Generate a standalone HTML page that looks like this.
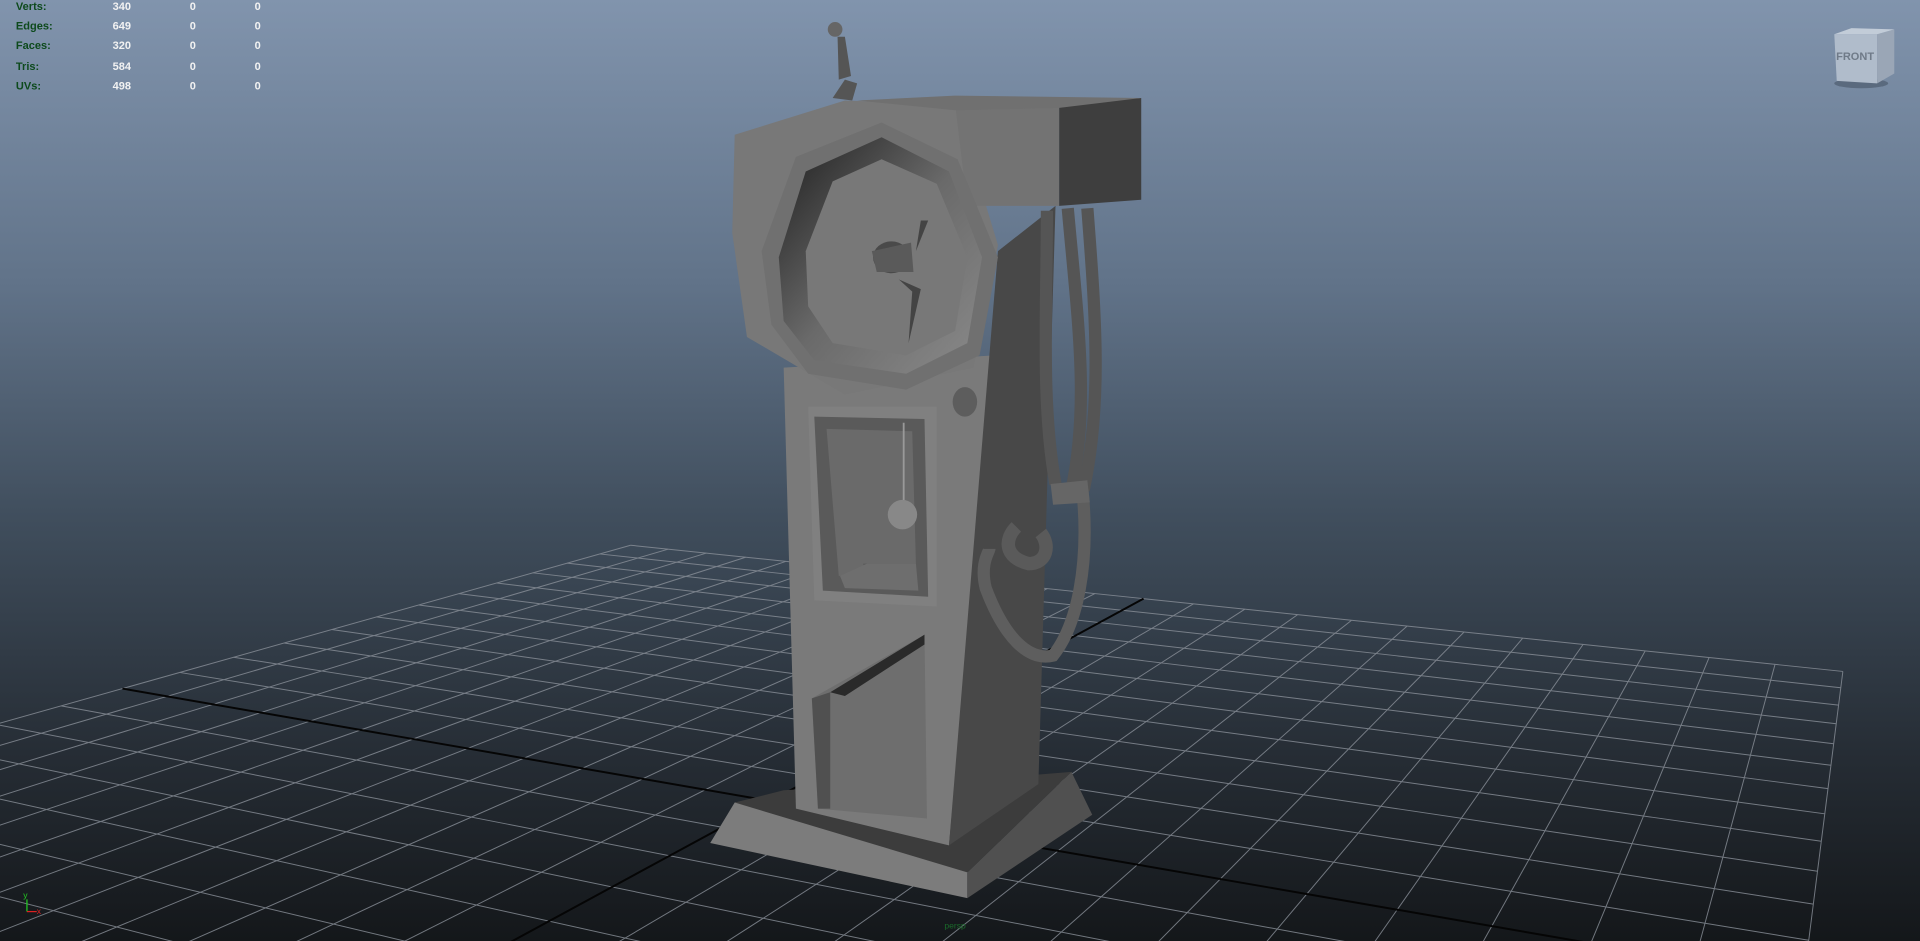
<!DOCTYPE html>
<html><head><meta charset="utf-8"><style>
html,body{margin:0;padding:0;width:1920px;height:941px;overflow:hidden;background:#333}
svg{display:block}
</style></head><body>
<svg id="s" width="1920" height="941" viewBox="0 0 1568 768" preserveAspectRatio="none" xmlns="http://www.w3.org/2000/svg">
<defs>
<linearGradient id="bg" x1="0" y1="0" x2="0" y2="1">
<stop offset="0" stop-color="#8194ad"/>
<stop offset="0.3" stop-color="#617389"/>
<stop offset="0.55" stop-color="#404e5d"/>
<stop offset="0.8" stop-color="#262d35"/>
<stop offset="1" stop-color="#14171a"/>
</linearGradient>
<linearGradient id="face" x1="0" y1="0" x2="1" y2="1">
<stop offset="0" stop-color="#1e1e1e"/><stop offset="0.5" stop-color="#6a6a6a"/><stop offset="1" stop-color="#8a8a8a"/>
</linearGradient>
</defs>
<rect width="1568" height="768" fill="url(#bg)"/>
<g id="grid" stroke="#8a9099" stroke-width="0.8" fill="none" opacity="0.8"></g>
<g id="axes" stroke="#050505" stroke-width="1.6"></g>
<g stroke="none">
<polygon points="580,688 600,655 640,648 790,712 790,733" fill="#7c7c7c"/>
<polygon points="790,712 790,733 892,665 875,630" fill="#505050"/>
<polygon points="600,655 640,645 850,632 875,630 790,712" fill="#3c3c3c"/>
<polygon points="640,300 812,290 775,690 650,660" fill="#7a7a7a"/>
<polygon points="815,205 862,168 848,640 775,690" fill="#484848"/>
<polygon points="600,110 690,82 780,85 815,200 795,300 690,322 610,275 598,190" fill="#787878"/>
<polygon points="780,85 865,85 865,168 790,168" fill="#737373"/>
<polygon points="865,85 932,80 932,163 865,168" fill="#3e3e3e"/>
<polygon points="700,82 780,78 932,80 865,88 780,90" fill="#707070"/>
<polygon points="622,205 650,128 720,100 782,130 815,210 800,290 740,318 660,305 630,265" fill="#707070"/>
<polygon points="636,210 658,140 720,112 775,140 802,210 790,280 740,305 665,294 640,262" fill="url(#face)"/>
<polygon points="658,205 680,148 720,130 765,150 790,210 780,270 740,290 680,280 660,250" fill="#787878"/>
<ellipse cx="728" cy="210" rx="15" ry="13" fill="#4a4a4a"/>
<polygon points="712,205 744,198 746,222 716,222" fill="#5a5a5a"/>
<polygon points="734,228 752,236 742,280 745,238" fill="#444"/>
<polygon points="752,180 758,180 748,205" fill="#444"/>
<polygon points="680,80 690,65 700,68 696,82" fill="#555"/>
<polygon points="685,65 695,62 690,30 684,30" fill="#555"/>
<circle cx="682" cy="24" r="6" fill="#666"/>
<ellipse cx="788" cy="328" rx="10" ry="12" fill="#5d5d5d"/>
<polygon points="660,332 765,332 765,495 665,490" fill="#808080"/>
<polygon points="665,340 755,342 758,487 672,482" fill="#5a5a5a"/>
<polygon points="675,350 745,352 748,460 705,460 706,470 685,470" fill="#6a6a6a"/>
<polygon points="708,460 748,460 750,482 690,480 686,470" fill="#6e6e6e"/>
<line x1="738" y1="345" x2="738" y2="410" stroke="#999" stroke-width="1.5"/>
<circle cx="737" cy="420" r="12" fill="#888"/>
<polygon points="663,570 755,518 757,668 668,660" fill="#6e6e6e"/>
<polygon points="663,570 678,565 678,660 668,660" fill="#505050"/>
<polygon points="678,565 755,518 755,526 690,568" fill="#2a2a2a"/>
<path d="M872,170 C880,260 890,330 875,400 M888,170 C895,260 900,330 885,400 M855,172 C855,250 850,330 862,395" stroke="#555" stroke-width="10" fill="none"/>
<path d="M884,400 C890,460 880,510 860,535 C840,540 820,520 805,480 C800,460 808,450 808,448" stroke="#5e5e5e" stroke-width="10" fill="none"/>
<polygon points="858,395 888,392 890,410 860,412" fill="#666"/>
<path d="M830,430 C820,440 820,455 840,460 C855,460 858,445 850,435" stroke="#5a5a5a" stroke-width="11" fill="none"/>
</g>
<g font-family="Liberation Sans, sans-serif" font-size="9" font-weight="bold">
<g fill="#0d4a1c">
<text x="13" y="8">Verts:</text><text x="13" y="24">Edges:</text><text x="13" y="40">Faces:</text><text x="13" y="57">Tris:</text><text x="13" y="73">UVs:</text>
</g>
<g fill="#f2f2f2" text-anchor="end">
<text x="107" y="8">340</text><text x="107" y="24">649</text><text x="107" y="40">320</text><text x="107" y="57">584</text><text x="107" y="73">498</text>
<text x="160" y="8">0</text><text x="160" y="24">0</text><text x="160" y="40">0</text><text x="160" y="57">0</text><text x="160" y="73">0</text>
<text x="213" y="8">0</text><text x="213" y="24">0</text><text x="213" y="40">0</text><text x="213" y="57">0</text><text x="213" y="73">0</text>
</g>
</g>
<ellipse cx="1520" cy="68" rx="22" ry="4" fill="#3d4a5a" opacity="0.5"/>
<polygon points="1498,28 1533,28 1533,68 1500,66" fill="#b0bccb"/>
<polygon points="1533,28 1547,24 1547,60 1533,68" fill="#9aa6b6"/>
<polygon points="1498,28 1512,23 1547,24 1533,28" fill="#c2ccd8"/>
<text x="1515" y="49" font-family="Liberation Sans, sans-serif" font-size="9" font-weight="bold" fill="#6f7a88" text-anchor="middle">FRONT</text>
<line x1="22" y1="744" x2="22" y2="734" stroke="#2c2" stroke-width="1"/>
<line x1="22" y1="744" x2="30" y2="744" stroke="#d22" stroke-width="1"/>
<text x="19" y="733" font-family="Liberation Sans" font-size="7" fill="#2c2">y</text>
<text x="30" y="746" font-family="Liberation Sans" font-size="7" fill="#d22">x</text>
<text x="780" y="758" font-family="Liberation Sans" font-size="7" fill="#1a6a2a" text-anchor="middle">persp</text>
</svg>
<script>
(function(){
var src=[[0,0],[1,0],[0,0.5],[1,0.5]], dst=[[515,445],[1505,548],[100,562],[1473,800]];
var A=[],b=[];
for(var i=0;i<4;i++){var x=src[i][0],y=src[i][1],X=dst[i][0],Y=dst[i][1];
A.push([x,y,1,0,0,0,-x*X,-y*X]);b.push(X);
A.push([0,0,0,x,y,1,-x*Y,-y*Y]);b.push(Y);}
var n=8;for(var c=0;c<n;c++){var p=c;for(var r=c+1;r<n;r++)if(Math.abs(A[r][c])>Math.abs(A[p][c]))p=r;
var t=A[c];A[c]=A[p];A[p]=t;t=b[c];b[c]=b[p];b[p]=t;
for(var r=0;r<n;r++){if(r==c)continue;var f=A[r][c]/A[c][c];for(var k=c;k<n;k++)A[r][k]-=f*A[c][k];b[r]-=f*b[c];}}
var h=[];for(var i=0;i<n;i++)h.push(b[i]/A[i][i]);
function P(u,v){var w=h[6]*u+h[7]*v+1;return [(h[0]*u+h[1]*v+h[2])/w,(h[3]*u+h[4]*v+h[5])/w];}
function seg(u0,v0,u1,v1){var a=P(u0,v0),bb=P(u1,v1);return '<line x1="'+a[0].toFixed(1)+'" y1="'+a[1].toFixed(1)+'" x2="'+bb[0].toFixed(1)+'" y2="'+bb[1].toFixed(1)+'"/>';}
var s='',N=24;
for(var i=0;i<=N;i++){var t=i/N;s+=seg(t,0,t,1);s+=seg(0,t,1,t);}
document.getElementById('grid').innerHTML=s;
document.getElementById('axes').innerHTML=seg(0.5,0,0.5,1)+seg(0,0.5,1,0.5);
})();
</script>
</body></html>
